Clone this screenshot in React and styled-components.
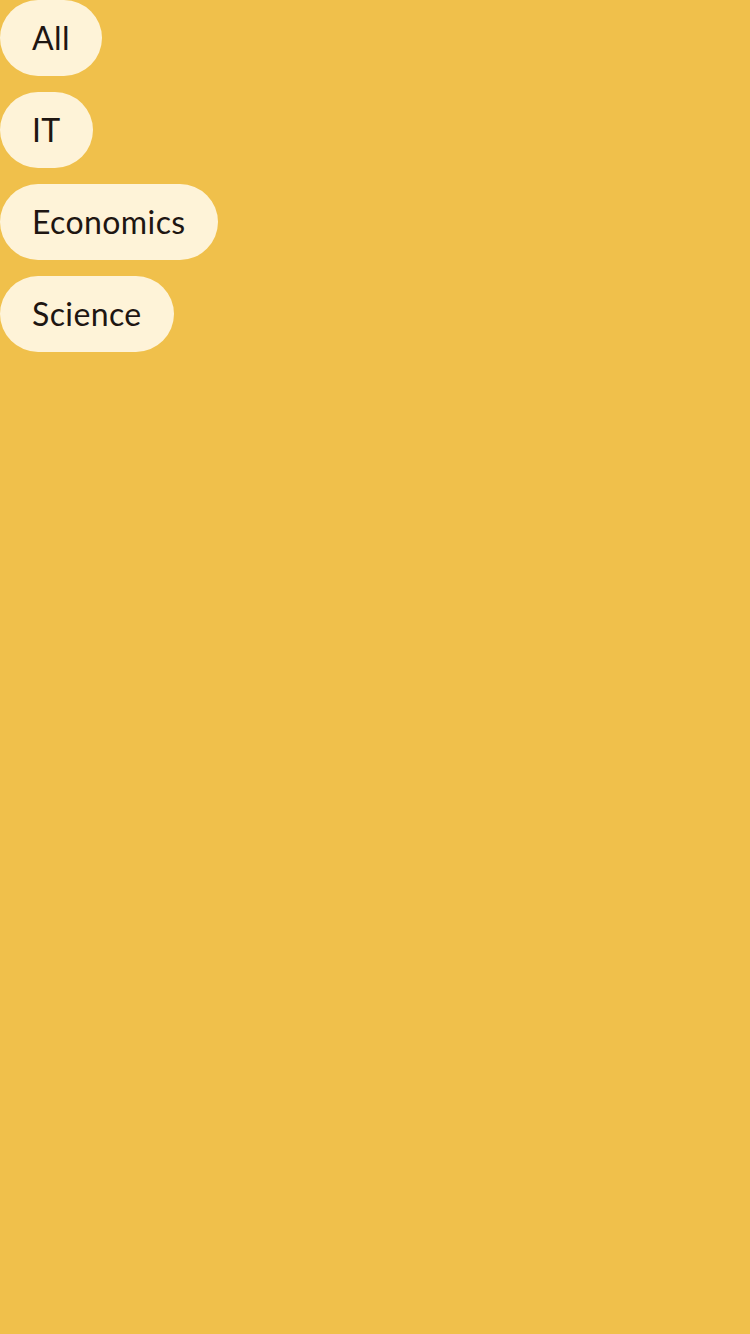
import React from "react";
import styled, { createGlobalStyle } from "styled-components";

const Global = createGlobalStyle`
  html, body { margin: 0; padding: 0; background: #f0c04b; }
  body { font-family: Lato, "Noto Sans", sans-serif; }
`;

const Page = styled.div`
  min-height: 1334px;
  background: #f0c04b;
  display: flex;
  flex-direction: column;
  align-items: flex-start;
  gap: 16px;
`;

const Chip = styled.button`
  box-sizing: border-box;
  height: 76px;
  padding: 0 32px 2px;
  border: none;
  border-radius: 38px;
  background: #fef3d8;
  color: #1e1612;
  font-family: Lato, "Noto Sans", sans-serif;
  font-size: 32px;
  letter-spacing: 0.4px;
  font-weight: 400;
  display: flex;
  align-items: center;
  cursor: pointer;
`;

const items = ["All", "IT", "Economics", "Science"];

export default function App() {
  return (
    <>
      <Global />
      <Page>
        {items.map((t) => (
          <Chip key={t}>{t}</Chip>
        ))}
      </Page>
    </>
  );
}
